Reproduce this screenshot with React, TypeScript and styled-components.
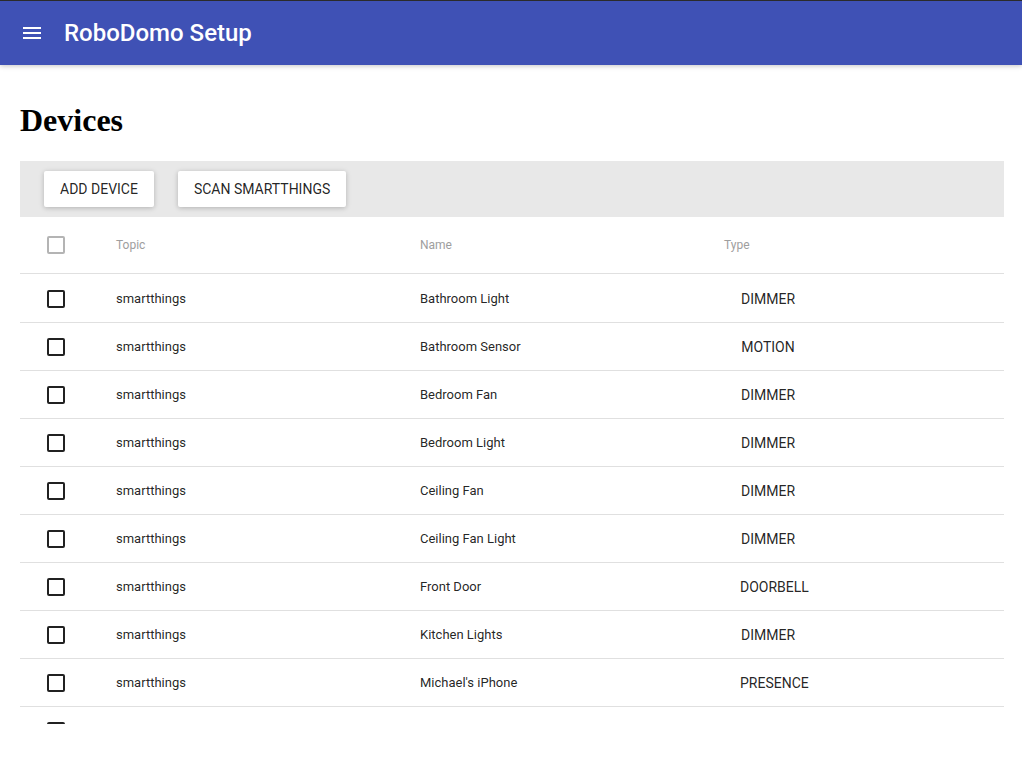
import styled, { createGlobalStyle } from "styled-components";

const GlobalStyle = createGlobalStyle`
  html, body {
    margin: 0;
    padding: 0;
    background: #fff;
    overflow: hidden;
  }
  body {
    border-top: 1px solid #2b2b2b;
  }
`;

const Page = styled.div`
  height: 767px;
  display: flex;
  flex-direction: column;
  overflow: hidden;
`;

const AppBar = styled.header`
  height: 64px;
  flex-shrink: 0;
  background-color: rgb(63, 81, 181);
  display: flex;
  align-items: center;
  padding-left: 23px;
  gap: 23px;
  box-shadow: rgba(0, 0, 0, 0.12) 0px 1px 6px, rgba(0, 0, 0, 0.12) 0px 1px 4px;
  position: relative;
  z-index: 1;
  h2 {
    margin: 0;
    font-family: Roboto, "Liberation Sans", sans-serif;
    font-weight: 500;
    font-size: 24px;
    color: #fff;
  }
`;

const MenuIcon = styled.svg`
  width: 18px;
  height: 12px;
  display: block;
`;

const Content = styled.main`
  padding: 0 18px 0 20px;
  flex: 1;
  min-height: 0;
  display: flex;
  flex-direction: column;
  h1 {
    font-family: "Liberation Serif", "Times New Roman", serif;
    font-size: 32px;
    font-weight: 700;
    margin: 37px 0 22px;
    line-height: 37px;
    color: #000;
  }
`;

const Toolbar = styled.div`
  height: 56px;
  flex-shrink: 0;
  background-color: rgb(232, 232, 232);
  display: flex;
  align-items: center;
  gap: 24px;
  padding-left: 24px;
`;

const RaisedButton = styled.button`
  height: 36px;
  min-width: 88px;
  padding: 0 16px;
  border: none;
  border-radius: 2px;
  background: #fff;
  font-family: Roboto, "Liberation Sans", sans-serif;
  font-size: 14px;
  color: rgba(0, 0, 0, 0.87);
  text-transform: uppercase;
  box-shadow: rgba(0, 0, 0, 0.12) 0px 1px 6px, rgba(0, 0, 0, 0.12) 0px 1px 4px;
  cursor: pointer;
`;

const TableWrap = styled.div`
  height: 507px;
  overflow: hidden;
`;

const Body = styled.div`
  padding-top: 1px;
`;

const Row = styled.div<{ $head?: boolean }>`
  display: grid;
  grid-template-columns: 96px 304px 304px 1fr;
  align-items: center;
  height: ${(p) => (p.$head ? "56px" : "47px")};
  border-bottom: 1px solid rgb(224, 224, 224);
  font-family: Roboto, "Liberation Sans", sans-serif;
  font-size: ${(p) => (p.$head ? "12px" : "13px")};
  color: ${(p) => (p.$head ? "rgb(158, 158, 158)" : "rgba(0, 0, 0, 0.87)")};
`;

const CheckCell = styled.div`
  padding-left: 24px;
  display: flex;
  align-items: center;
`;

const Box = styled.span<{ $muted?: boolean }>`
  width: 24px;
  height: 24px;
  display: flex;
  align-items: center;
  justify-content: center;
  &::before {
    content: "";
    width: 14px;
    height: 14px;
    border: 2px solid ${(p) => (p.$muted ? "rgb(180, 180, 180)" : "rgba(0, 0, 0, 0.87)")};
    border-radius: 2px;
  }
`;

const TypeButton = styled.span`
  display: inline-flex;
  justify-content: center;
  align-items: center;
  min-width: 88px;
  height: 36px;
  padding: 0 16px;
  box-sizing: border-box;
  font-size: 14px;
  text-transform: uppercase;
  color: rgba(0, 0, 0, 0.87);
  justify-self: start;
`;

const devices = [
  { topic: "smartthings", name: "Bathroom Light", type: "DIMMER" },
  { topic: "smartthings", name: "Bathroom Sensor", type: "MOTION" },
  { topic: "smartthings", name: "Bedroom Fan", type: "DIMMER" },
  { topic: "smartthings", name: "Bedroom Light", type: "DIMMER" },
  { topic: "smartthings", name: "Ceiling Fan", type: "DIMMER" },
  { topic: "smartthings", name: "Ceiling Fan Light", type: "DIMMER" },
  { topic: "smartthings", name: "Front Door", type: "DOORBELL" },
  { topic: "smartthings", name: "Kitchen Lights", type: "DIMMER" },
  { topic: "smartthings", name: "Michael's iPhone", type: "PRESENCE" },
];

export default function App() {
  return (
    <Page>
      <GlobalStyle />
      <AppBar>
        <MenuIcon viewBox="0 0 18 12">
          <rect x="0" y="0" width="18" height="2" fill="#fff" />
          <rect x="0" y="5" width="18" height="2" fill="#fff" />
          <rect x="0" y="10" width="18" height="2" fill="#fff" />
        </MenuIcon>
        <h2>RoboDomo Setup</h2>
      </AppBar>
      <Content>
        <h1>Devices</h1>
        <Toolbar>
          <RaisedButton>Add Device</RaisedButton>
          <RaisedButton>Scan SmartThings</RaisedButton>
        </Toolbar>
        <TableWrap>
          <Row $head>
            <CheckCell>
              <Box $muted />
            </CheckCell>
            <div>Topic</div>
            <div>Name</div>
            <div>Type</div>
          </Row>
          <Body>
            {devices.map((d) => (
              <Row key={d.name}>
                <CheckCell>
                  <Box />
                </CheckCell>
                <div>{d.topic}</div>
                <div>{d.name}</div>
                <TypeButton>{d.type}</TypeButton>
              </Row>
            ))}
            {/* next row, scrolled out of view */}
            <Row>
              <CheckCell>
                <Box />
              </CheckCell>
            </Row>
          </Body>
        </TableWrap>
      </Content>
    </Page>
  );
}
